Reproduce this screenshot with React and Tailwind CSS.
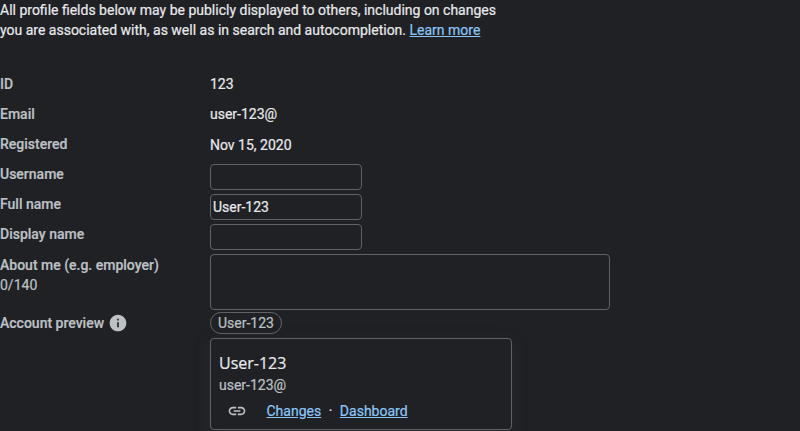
import { MdInfo, MdLink } from "react-icons/md";

function Row({ label, h, children }) {
  return (
    <div className={`flex ${h}`}>
      <div className="w-[210px] shrink-0 font-medium text-[#bdc1c6]">{label}</div>
      <div className="min-w-0">{children}</div>
    </div>
  );
}

function Field({ value = "", label }) {
  return (
    <input
      aria-label={label}
      defaultValue={value}
      className="block h-[26px] w-[152px] rounded border border-[#5f6368] bg-[#202124] px-0.5 text-sm text-[#e8eaed] outline-none [-webkit-text-stroke:0.2px]"
    />
  );
}

function Link({ children }) {
  return (
    <a href="#" className="text-[#8ac7f8] underline">
      {children}
    </a>
  );
}

export default function App() {
  return (
    <div className="h-[431px] w-[800px] overflow-hidden bg-[#202124] font-['Roboto',sans-serif] text-sm leading-5 text-[#e8eaed] [-webkit-text-stroke:0.2px]">
      <p className="whitespace-nowrap">
        All profile fields below may be publicly displayed to others, including on changes
        <br />
        you are associated with, as well as in search and autocompletion. <Link>Learn more</Link>
      </p>
      <div className="pt-[34px]">
        <Row label="ID" h="h-[30px]">123</Row>
        <Row label="Email" h="h-[30px]">user-123@</Row>
        <Row label="Registered" h="h-[30px]">
          <div className="pt-px">Nov 15, 2020</div>
        </Row>
        <Row label="Username" h="h-[30px]"><Field label="Username" /></Row>
        <Row label="Full name" h="h-[30px]"><Field label="Full name" value="User-123" /></Row>
        <Row label="Display name" h="h-[30px]"><Field label="Display name" /></Row>
        <Row
          label={
            <div className="pt-px">
              About me (e.g. employer)
              <div className="font-normal">0/140</div>
            </div>
          }
          h="h-[58px]"
        >
          <textarea
            aria-label="About me"
            className="block h-14 w-[400px] resize-none rounded border border-[#5f6368] bg-[#202124] outline-none"
          />
        </Row>
        <Row
          label={
            <div className="flex items-center gap-[3.5px] pt-px">
              Account preview <MdInfo className="size-5 text-[#bdc1c6]" />
            </div>
          }
          h="h-[118px]"
        >
          <div className="flex h-[22px] w-[72px] items-center justify-center rounded-full border border-[#5f6368] text-[#bdc1c6]">
            User-123
          </div>
          <div className="mt-1 h-[92px] w-[302px] rounded border border-[#5f6368] bg-[#202124] px-2 pt-[13px] shadow-[0_4px_16px_rgba(60,64,67,0.3)]">
            <div className="pb-px font-['Open_Sans',sans-serif] text-base leading-[22px]">User-123</div>
            <div className="text-[#bdc1c6]">user-123@</div>
            <div className="flex items-center pt-1.5 pl-2">
              <MdLink className="size-5 text-[#bdc1c6]" />
              <div className="flex gap-[7.5px] pl-[19.5px]">
                <Link>Changes</Link>
                <span>·</span>
                <Link>Dashboard</Link>
              </div>
            </div>
          </div>
        </Row>
      </div>
    </div>
  );
}
